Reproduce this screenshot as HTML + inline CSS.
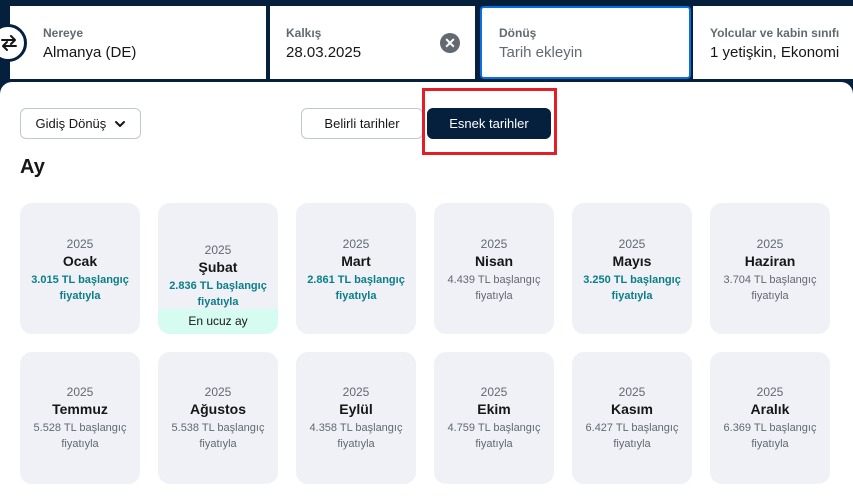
<!DOCTYPE html>
<html><head><meta charset="utf-8"><style>
*{box-sizing:border-box;margin:0;padding:0}
body{width:853px;height:504px;overflow:hidden;background:#05203c;font-family:"Liberation Sans",sans-serif;position:relative;color:#161616}
.f{position:absolute;top:6px;height:73px;background:#fff}
.lab{position:absolute;font-size:12px;font-weight:bold;color:#626971;top:20px}
.val{position:absolute;font-size:15px;top:38px;color:#161616}
.panel{position:absolute;left:0;top:82px;width:853px;height:422px;background:#fff;border-radius:12px 12px 0 0}
.btn{position:absolute;top:108px;height:31px;border:1px solid #c1c7cf;border-radius:6px;font-size:13px;display:flex;align-items:center;justify-content:center}
.card{position:absolute;width:120px;border-radius:12px;background:#eff1f6;text-align:center;overflow:hidden}
.y{font-size:12px;color:#626971;line-height:16px}
.m{font-size:14px;font-weight:bold;line-height:18px}
.p{font-size:11px;color:#626971;line-height:16px;padding:0 6px;margin-top:2px}
.c{color:#0b7e8a;font-weight:bold}
</style></head><body>
<div class="f" style="left:10px;width:256px"><div class="lab" style="left:33px">Nereye</div><div class="val" style="left:33px">Almanya (DE)</div></div>
<div style="position:absolute;left:-11px;top:24px;width:38px;height:38px;border-radius:50%;background:#fff;border:3px solid #05203c"></div>
<svg style="position:absolute;left:0;top:35px" width="18" height="16" viewBox="0 0 18 16"><g fill="none" stroke="#161616" stroke-width="2" stroke-linecap="round" stroke-linejoin="round"><path d="M2 5h13M11 1l4 4-4 4"/><path d="M16 11H3M7 7l-4 4 4 4"/></g></svg>
<div class="f" style="left:270px;width:205px"><div class="lab" style="left:16px">Kalkış</div><div class="val" style="left:16px">28.03.2025</div>
<div style="position:absolute;left:170px;top:27px;width:20px;height:20px;border-radius:50%;background:#626971;color:#fff;font-size:14px;font-weight:bold;line-height:20px;text-align:center">✕</div></div>
<div class="f" style="left:480px;width:211px;border:2px solid #0770e3;border-radius:4px"><div class="lab" style="left:17px;top:18px">Dönüş</div><div class="val" style="left:17px;top:36px;color:#626971">Tarih ekleyin</div></div>
<div class="f" style="left:693px;width:160px"><div class="lab" style="left:17px">Yolcular ve kabin sınıfı</div><div class="val" style="left:17px">1 yetişkin, Ekonomi</div></div>
<div class="panel"></div>
<div class="btn" style="left:20px;width:121px">Gidiş Dönüş&nbsp;&nbsp;<svg width="12" height="8" viewBox="0 0 12 8"><path d="M2 2l4 4 4-4" fill="none" stroke="#161616" stroke-width="2" stroke-linecap="round" stroke-linejoin="round"/></svg></div>
<div class="btn" style="left:301px;width:122px">Belirli tarihler</div>
<div class="btn" style="left:427px;width:124px;background:#05203c;border-color:#05203c;color:#fff">Esnek tarihler</div>
<div style="position:absolute;left:422px;top:88px;width:135px;height:67px;border:3px solid #e41e26"></div>
<div style="position:absolute;left:20px;top:156px;font-size:20px;font-weight:bold">Ay</div>
<div class="card" style="left:20px;top:203px;height:131px;padding-top:33px"><div class="y">2025</div><div class="m">Ocak</div><div class="p c">3.015 TL başlangıç fiyatıyla</div></div>
<div class="card" style="left:158px;top:203px;height:131px;padding-top:39px"><div class="y">2025</div><div class="m">Şubat</div><div class="p c">2.836 TL başlangıç fiyatıyla</div><div style="position:absolute;left:0;bottom:0;width:120px;height:25px;background:#d6fbf0;font-size:12px;line-height:25px">En ucuz ay</div></div>
<div class="card" style="left:296px;top:203px;height:131px;padding-top:33px"><div class="y">2025</div><div class="m">Mart</div><div class="p c">2.861 TL başlangıç fiyatıyla</div></div>
<div class="card" style="left:434px;top:203px;height:131px;padding-top:33px"><div class="y">2025</div><div class="m">Nisan</div><div class="p">4.439 TL başlangıç fiyatıyla</div></div>
<div class="card" style="left:572px;top:203px;height:131px;padding-top:33px"><div class="y">2025</div><div class="m">Mayıs</div><div class="p c">3.250 TL başlangıç fiyatıyla</div></div>
<div class="card" style="left:710px;top:203px;height:131px;padding-top:33px"><div class="y">2025</div><div class="m">Haziran</div><div class="p">3.704 TL başlangıç fiyatıyla</div></div>
<div class="card" style="left:20px;top:352px;height:132px;padding-top:32px"><div class="y">2025</div><div class="m">Temmuz</div><div class="p">5.528 TL başlangıç fiyatıyla</div></div>
<div class="card" style="left:158px;top:352px;height:132px;padding-top:32px"><div class="y">2025</div><div class="m">Ağustos</div><div class="p">5.538 TL başlangıç fiyatıyla</div></div>
<div class="card" style="left:296px;top:352px;height:132px;padding-top:32px"><div class="y">2025</div><div class="m">Eylül</div><div class="p">4.358 TL başlangıç fiyatıyla</div></div>
<div class="card" style="left:434px;top:352px;height:132px;padding-top:32px"><div class="y">2025</div><div class="m">Ekim</div><div class="p">4.759 TL başlangıç fiyatıyla</div></div>
<div class="card" style="left:572px;top:352px;height:132px;padding-top:32px"><div class="y">2025</div><div class="m">Kasım</div><div class="p">6.427 TL başlangıç fiyatıyla</div></div>
<div class="card" style="left:710px;top:352px;height:132px;padding-top:32px"><div class="y">2025</div><div class="m">Aralık</div><div class="p">6.369 TL başlangıç fiyatıyla</div></div>
</body></html>
